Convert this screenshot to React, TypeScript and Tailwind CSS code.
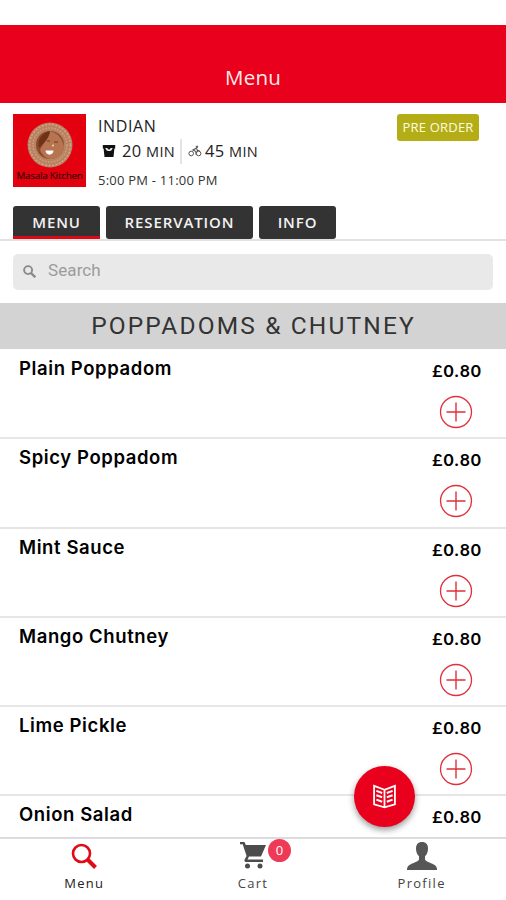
import { useState } from "react";
import clsx from "clsx";

interface MenuItem {
  id: number;
  name: string;
  price: string;
}

const items: MenuItem[] = [
  { id: 1, name: "Plain Poppadom", price: "£0.80" },
  { id: 2, name: "Spicy Poppadom", price: "£0.80" },
  { id: 3, name: "Mint Sauce", price: "£0.80" },
  { id: 4, name: "Mango Chutney", price: "£0.80" },
  { id: 5, name: "Lime Pickle", price: "£0.80" },
  { id: 6, name: "Onion Salad", price: "£0.80" },
];

const tabs = [
  { label: "MENU", width: "w-[87px]" },
  { label: "RESERVATION", width: "w-[147px]" },
  { label: "INFO", width: "w-[77px]" },
];

function Logo() {
  return (
    <div className="relative h-[73px] w-[73px] shrink-0 bg-[#e3000f]">
      <svg viewBox="0 0 73 73" className="h-full w-full">
        <circle cx="37" cy="31" r="22.5" fill="#b98363" />
        <circle cx="37" cy="31" r="20.5" fill="none" stroke="#d0a582" strokeWidth="1.5" strokeDasharray="2 1.5" />
        <circle cx="37" cy="31" r="17" fill="none" stroke="#cfa07c" strokeWidth="1.5" strokeDasharray="1.5 1.5" />
        <circle cx="37" cy="31" r="14" fill="#8b4a2b" />
        <path d="M37 17c-1 8-7 12-10 19 2 5 6 9 11 9 7 0 12-5 13-12-1-8-6-14-14-16z" fill="#b67451" />
        <path d="M37 17c-1 8-6 11-11 17-2-7 2-15 11-17z" fill="#6d3218" />
        <path d="M32.500 36.500h8c0 5.500-8 5.500-8 0z" fill="#fff" />
        <circle cx="40" cy="31.500" r="1" fill="#f4d9a8" />
        <path d="M34 27h3M41 28h4" stroke="#713a20" />
      </svg>
      <span className="absolute bottom-[4px] left-0 w-full text-center text-[9.800px] leading-[14px] tracking-[-0.2px] whitespace-nowrap text-[#3a0508] [-webkit-text-stroke:0.2px]">
        Masala Kitchen
      </span>
    </div>
  );
}

function BucketIcon() {
  return (
    <svg viewBox="0 0 14 14" className="h-[14px] w-[14px]">
      <path d="M.8 1h12.400v3.500h-.8L11.500 13h-9L1.600 4.500H.8z" fill="#111" />
      <path d="M3.300 4h7.400l-1 2c-1 1.300-4.400 1.300-5.400 0z" fill="#eee" />
      <circle cx="7" cy="4.300" r="1.300" fill="#111" />
    </svg>
  );
}

function BikeIcon() {
  return (
    <svg viewBox="0 0 14 12" className="h-[12px] w-[14px]" fill="none" stroke="#555" strokeWidth="1">
      <circle cx="3.200" cy="8.500" r="2.300" />
      <circle cx="10.600" cy="8.500" r="2.300" />
      <path d="M8.500 3 5 5l3 1.500v3M8.500 3.500 9.500 5.500h2" strokeWidth="1.200" />
      <circle cx="9" cy="1.800" r=".8" fill="#555" />
    </svg>
  );
}

function AddButton() {
  return (
    <button className="block h-[34px] w-[34px]">
      <svg viewBox="0 0 34 34" fill="none" stroke="#e0303a">
        <circle cx="17" cy="17" r="15.500" strokeWidth="1.300" />
        <path d="M7.500 17h19M17 7.500v19" strokeWidth="1.400" />
      </svg>
    </button>
  );
}

function BookIcon() {
  return (
    <svg viewBox="0 0 24 24" className="h-[25px] w-[25px]" fill="none" stroke="#fff" strokeWidth="1.700">
      <path d="M12 5.500 2 1.800v17.700L12 22.300l10-2.800V1.800z" />
      <path d="M12 5.500v16.800" strokeWidth="1.700" />
      <path
        d="m4.200 6.600 5.600 2M4.200 10.800l5.600 2M4.200 15l5.600 2M19.800 6.600l-5.600 2M19.800 10.800l-5.600 2M19.800 15l-5.600 2"
        strokeWidth="2"
      />
    </svg>
  );
}

export default function App() {
  const [activeTab, setActiveTab] = useState("MENU");
  const [query, setQuery] = useState("");

  return (
    <div className="relative flex h-[900px] w-[506px] flex-col overflow-hidden bg-white font-['Open_Sans',sans-serif] text-[#222]">
      <header className="mt-[25px] flex h-[78px] shrink-0 items-end justify-center bg-[#e8001c] pb-[11px]">
        <h1 className="text-[20.5px] leading-[30px] tracking-[0.2px] text-[#ffe9e9]">Menu</h1>
      </header>

      <section className="flex h-[103px] shrink-0 items-start pt-[11px] pr-[27px] pl-[13px]">
        <Logo />
        <div className="ml-[12px] flex-1">
          <p className="text-[16px] leading-[24px] tracking-[0.6px]">INDIAN</p>
          <div className="flex h-[26px] items-center text-[16.5px]">
            <span className="ml-[4px]">
              <BucketIcon />
            </span>
            <span className="ml-[6px] tracking-[0.3px]">
              20 <span className="text-[14.500px]">MIN</span>
            </span>
            <span className="ml-[5px] h-[25px] w-[2px] bg-[#e4e4e4]" />
            <span className="ml-[6px]">
              <BikeIcon />
            </span>
            <span className="ml-[3px] tracking-[0.3px]">
              45 <span className="text-[14.500px]">MIN</span>
            </span>
          </div>
          <p className="mt-[6px] text-[13px] leading-[20px] tracking-[0.230px] text-[#333]">5:00 PM - 11:00 PM</p>
        </div>
        <span className="flex h-[27px] w-[82px] items-center justify-center rounded-[3px] bg-[#b5ad16] pt-[1px] text-[13px] tracking-[0.2px] text-[#fffce0]">
          PRE ORDER
        </span>
      </section>

      <nav className="flex h-[35px] shrink-0 gap-[6px] border-b-2 border-[#e2e2e2] pl-[13px]">
        {tabs.map((tab) => (
          <button
            key={tab.label}
            onClick={() => setActiveTab(tab.label)}
            className={clsx(
              "h-[33px] rounded-[3px] bg-[#333] text-[15px] leading-[33px] font-semibold tracking-[0.9px] text-[#f2f2f2]",
              tab.width,
              activeTab === tab.label && "rounded-b-none shadow-[inset_0_-3px_0_#dc0814]"
            )}
          >
            {tab.label}
          </button>
        ))}
      </nav>

      <div className="shrink-0 px-[13px] py-[13px]">
        <div className="flex h-[36px] items-center rounded-[5px] bg-[#e9e9e9] pl-[10px]">
          <svg viewBox="0 0 14 14" className="mb-[2px] h-[13px] w-[13px]" fill="none" stroke="#8a8a8a" strokeWidth="2">
            <circle cx="5.500" cy="5.500" r="4.300" />
            <path d="m8.700 8.700 4.500 4.500" strokeWidth="2.500" />
          </svg>
          <input
            type="text"
            value={query}
            onChange={(e) => setQuery(e.target.value)}
            placeholder="Search"
            className="ml-[12px] flex-1 bg-transparent pb-[3px] font-[Roboto,sans-serif] text-[17px] tracking-[0.1px] placeholder:text-[#9b9b9b] focus:outline-none"
          />
        </div>
      </div>

      <h2 className="h-[46px] shrink-0 bg-[#d3d3d3] pl-[1px] text-center font-[Roboto,sans-serif] text-[24.500px] leading-[46px] tracking-[2.150px] text-[#333]">
        POPPADOMS &amp; CHUTNEY
      </h2>

      <main className="min-h-0 flex-1 overflow-hidden pt-px">
        {items.map((item) => (
          <div key={item.id} className="flex h-[89.300px] justify-between border-b-2 border-[#e6e6e6] pr-[24px] pl-[19px]">
            <p className="mt-[5px] font-[Inter,sans-serif] text-[18.500px] leading-[26px] font-semibold tracking-[0.600px] text-black">
              {item.name}
            </p>
            <div className="flex flex-col items-end">
              <p className="mt-[8px] font-[Lato,sans-serif] text-[17.500px] leading-[26px] font-bold tracking-[1px] text-black">
                {item.price}
              </p>
              <div className="mt-[11px] mr-[9px]">
                <AddButton />
              </div>
            </div>
          </div>
        ))}
      </main>

      <button className="absolute top-[766px] left-[354px] flex h-[61px] w-[61px] items-center justify-center rounded-full bg-[#e8001c] shadow-[0_3px_6px_rgba(0,0,0,0.4)]">
        <BookIcon />
      </button>

      <footer className="grid h-[63px] shrink-0 grid-cols-3 border-t-2 border-[#dcdcdc] bg-white text-[13px] tracking-[1.3px] text-[#444]">
        <a className="flex flex-col items-center pt-[4px]">
          <svg viewBox="0 0 26 26" className="h-[26px] w-[26px]" fill="none" stroke="#df0b16">
            <circle cx="10.500" cy="10.500" r="8.500" strokeWidth="2.600" />
            <path d="m16.500 16.500 8 8" strokeWidth="4" />
          </svg>
          <span className="mt-[4px] leading-[20px] text-[#222]">Menu</span>
        </a>
        <a className="flex flex-col items-center pt-[3px]">
          <span className="relative">
            <svg viewBox="0 0 26 27" className="h-[27px] w-[26px]" fill="#4c4c4c">
              <path d="M0 0h4.500l1.300 3H26l-5 11.500H9l-1.500 3H23V20H6.500c-2 0-2.500-1.500-1.600-3l1.700-3L2.700 2.300H0z" />
              <circle cx="7.500" cy="24" r="2.500" />
              <circle cx="20" cy="24" r="2.500" />
            </svg>
            <span className="absolute top-[-3px] left-[28px] flex h-[23px] w-[23px] items-center justify-center rounded-full bg-[#ee3a57] text-[13px] tracking-normal text-white">
              0
            </span>
          </span>
          <span className="mt-[4px] leading-[20px]">Cart</span>
        </a>
        <a className="flex flex-col items-center pt-[3px]">
          <svg viewBox="0 0 30 28" className="h-[28px] w-[30px]" fill="#565656">
            <path d="M15 0c-4 0-6 2.600-6 6.500 0 3.200 1 6 3 7.700v3.300c-.5 1.500-3 2.500-6 3.800-4 1.600-6 2.700-6 6.700h30c0-4-2-5.100-6-6.700-3-1.300-5.500-2.300-6-3.800v-3.300c2-1.700 3-4.500 3-7.700C21 2.600 19 0 15 0z" />
          </svg>
          <span className="mt-[3px] leading-[20px]">Profile</span>
        </a>
      </footer>
    </div>
  );
}
